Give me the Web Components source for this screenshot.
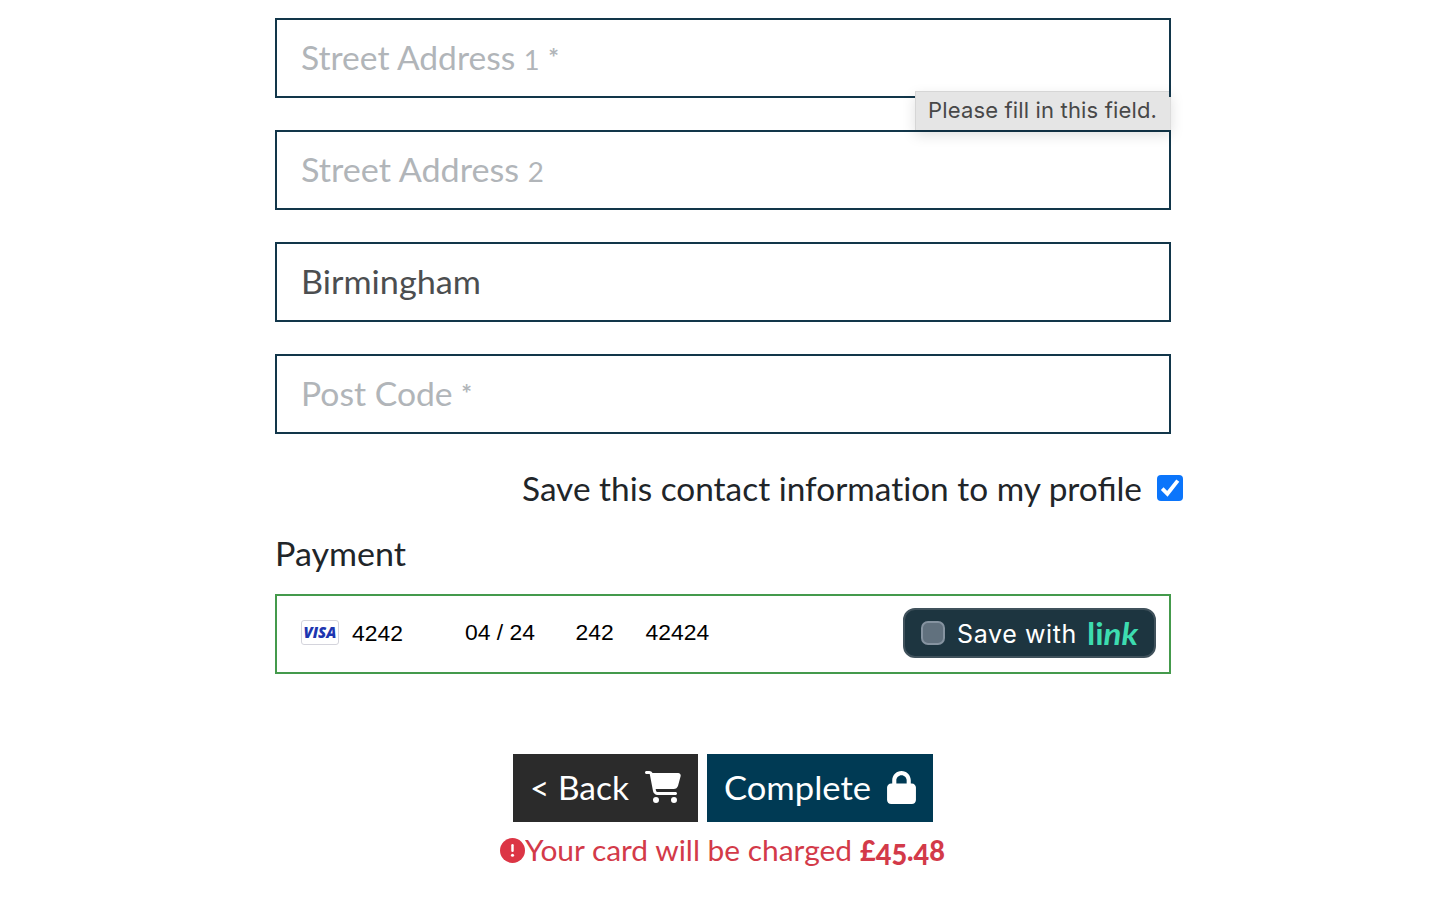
<!DOCTYPE html>
<html lang="en">
<head>
<meta charset="utf-8">
<title>Checkout</title>
<style>
  body { margin: 0; background: #fff; font-family: Lato, sans-serif; color: #212529; }
</style>
</head>
<body>
<checkout-page></checkout-page>
<script>
  const shadow = (el, html) => { el.attachShadow({ mode: 'open' }).innerHTML = html; };

  // Single line of text that fills a given measure: widened glyphs by default, tracked with [track].
  customElements.define('fit-text', class extends HTMLElement {
    connectedCallback() {
      shadow(this, `<style>
        :host { display: block; white-space: nowrap; }
        span { display: inline-block; white-space: pre; transform-origin: 0 50%; }
      </style><span><slot></slot></span>`);
      const w = +this.getAttribute('w');
      const span = this.shadowRoot.querySelector('span');
      const natural = span.getBoundingClientRect().width;
      if (this.hasAttribute('track')) span.style.letterSpacing = ((w - natural) / this.textContent.length) + 'px';
      else span.style.transform = `scaleX(${w / natural})`;
      this.style.width = w + 'px';
    }
  });

  customElements.define('form-field', class extends HTMLElement {
    connectedCallback() {
      shadow(this, `<style>
        :host { display: flex; align-items: center; position: relative; box-sizing: border-box; height: 80px;
          border: 2px solid #12364a; padding: 0 24px 1px; font-size: 32px; line-height: 40px; color: #4c4e50; }
        :host([empty]) { color: #b1b5b9; }
      </style><slot></slot><slot name="tip"></slot>`);
    }
  });

  customElements.define('tool-tip', class extends HTMLElement {
    connectedCallback() {
      shadow(this, `<style>
        :host { position: absolute; top: 71px; right: -2px; width: 256px; height: 39px; box-sizing: border-box;
          padding-left: 12px; background: #e5e5e5; border: 1px solid #d6d6d6; border-bottom: 0; border-right-color: #dcdcdc;
          box-shadow: 0 5px 14px rgba(0,0,0,.13); font: 22px/37px Inter, sans-serif; color: #484848; }
        :host::after { content: ""; position: absolute; right: -1px; top: -1px; width: 2px; height: 6px; background: #12364a; }
      </style><slot></slot>`);
    }
  });

  customElements.define('check-box', class extends HTMLElement {
    connectedCallback() {
      shadow(this, `<style>:host { display: block; width: 26px; height: 26px; } svg { display: block; }</style>
      <svg width="26" height="26" viewBox="0 0 26 26"><rect width="26" height="26" rx="4" fill="#0b75fb"/>
      <path d="M5.200 13.600 10.400 18.800 20.800 5.600" fill="none" stroke="#fff" stroke-width="3.800"/></svg>`);
    }
  });

  customElements.define('visa-badge', class extends HTMLElement {
    connectedCallback() {
      shadow(this, `<style>
        :host { display: block; width: 38px; height: 25px; margin-bottom: 2px; } svg { display: block; }
        text { font: italic 800 15px "Open Sans", sans-serif; fill: #1d36b0; }
      </style>
      <svg width="38" height="25" viewBox="0 0 38 25"><rect x=".5" y=".5" width="37" height="24" rx="2.500" fill="#fff" stroke="#d4d4dc"/>
      <text x="2.500" y="18" textLength="33" lengthAdjust="spacingAndGlyphs">VISA</text></svg>`);
    }
  });

  customElements.define('link-button', class extends HTMLElement {
    connectedCallback() {
      shadow(this, `<style>
        :host { display: flex; align-items: center; box-sizing: border-box; width: 253px; height: 50px; padding-left: 16px;
          border: 2px solid #40525c; border-radius: 12px; background: #1d3540; color: #fff; font: 25px/40px Inter, sans-serif; }
        i { box-sizing: border-box; width: 24px; height: 24px; border: 2px solid #8593a0; border-radius: 7px; background: #61717e; }
        .save { margin: 2px 0 0 12px; }
        .logo { margin: 0 0 0 10px; font: 700 30px/40px Lato, sans-serif; color: #3ddcb0; }
      </style><i></i><fit-text class="save" track w="120">Save with</fit-text>
      <fit-text class="logo" w="51">li<em>nk</em></fit-text>`);
    }
  });

  customElements.define('card-field', class extends HTMLElement {
    connectedCallback() {
      shadow(this, `<style>
        :host { display: flex; align-items: center; box-sizing: border-box; height: 80px; border: 2px solid #449a4c;
          padding: 0 13px 2px 24px; font: 22.9px/28px "Liberation Sans", Arial, sans-serif; color: #000; }
        div { margin-bottom: 2px; }
        .num { margin: 0 0 0 13px; width: 113px; }
        .exp { width: 110.5px; } .cvc { width: 70px; } link-button { margin-left: auto; }
      </style>
      <visa-badge></visa-badge><div class="num">4242</div><div class="exp">04 / 24</div><div class="cvc">242</div><div>42424</div>
      <link-button></link-button>`);
    }
  });

  customElements.define('action-button', class extends HTMLElement {
    connectedCallback() {
      shadow(this, `<style>
        :host { display: flex; align-items: center; justify-content: space-between; box-sizing: border-box; height: 68px;
          padding: 0 17px 2px; background: #2b2b2b; color: #fff; font-size: 32px; line-height: 40px; }
        :host([primary]) { background: #003a54; }
        ::slotted(fit-text) { margin-top: 1px; }
      </style><slot></slot><slot name="icon"></slot>`);
    }
  });

  customElements.define('charge-note', class extends HTMLElement {
    connectedCallback() {
      shadow(this, `<style>
        :host { display: flex; align-items: center; height: 34px; color: #d33a49; font-size: 28px; line-height: 34px; }
        svg { display: block; margin-top: 1px; }
        b { font-weight: 900; margin-left: 8px; white-space: nowrap; }
        .low { position: relative; top: 4px; }
      </style>
      <svg width="25" height="25" viewBox="0 0 512 512"><circle cx="256" cy="256" r="256" fill="#dc3545"/><path d="M256 150v110" stroke="#fff" stroke-width="50" stroke-linecap="round"/><circle cx="256" cy="352" r="32" fill="#fff"/></svg>
      <fit-text w="327">Your card will be charged</fit-text><b><fit-text w="85">£<span class="low">45</span>.<span class="low">4</span>8</fit-text></b>`);
    }
  });

  customElements.define('checkout-page', class extends HTMLElement {
    connectedCallback() {
      shadow(this, `<style>
        :host { display: block; box-sizing: border-box; width: 1434px; height: 898px; padding: 18px 0 0 275px; overflow: hidden; }
        main { width: 896px; }
        .fields { display: grid; gap: 32px; }
        .fields form-field:first-child { z-index: 1; }
        .old { font-size: 26px; line-height: 0; }
        .star { font-size: 24px; line-height: 0; font-weight: 700; vertical-align: 3px; }
        .plain { letter-spacing: .01px; }
        .save { display: flex; justify-content: flex-end; align-items: center; margin: 35px -12px 0 0; gap: 15px; height: 40px; font-size: 32px; line-height: 40px; }
        check-box { margin-bottom: 2px; }
        h2 { margin: 24px 0 20px; font-weight: 400; font-size: 32px; line-height: 41px; height: 41px; }
        .actions { display: flex; gap: 9px; margin: 80px 0 0 238px; }
        .back { width: 185px; } .done { width: 226px; }
        charge-note { margin: 11px 0 0 225px; }
        svg { display: block; }
      </style>
      <main>
        <div class="fields">
          <form-field empty><fit-text w="258">Street Address <span class="old">1</span> <span class="star">*</span></fit-text><tool-tip slot="tip"><fit-text track w="229">Please fill in this field.</fit-text></tool-tip></form-field>
          <form-field empty><fit-text w="243">Street Address <span class="old">2</span></fit-text></form-field>
          <form-field><fit-text w="180">Birmingham</fit-text></form-field>
          <form-field empty><fit-text w="171">Post Code <span class="star">*</span></fit-text></form-field>
        </div>
        <div class="save"><fit-text w="620">Save this contact <span class="plain">information</span> to my profile</fit-text><check-box></check-box></div>
        <h2><fit-text w="131">Payment</fit-text></h2>
        <card-field></card-field>
        <div class="actions">
          <action-button class="back"><fit-text w="99">&lt; Back</fit-text>
            <svg slot="icon" width="36" height="32" viewBox="0 0 576 512"><path fill="#fff" d="M0 24C0 10.700 10.700 0 24 0h45.500c22 0 41.500 12.800 50.600 32h411c26.300 0 45.500 25 38.600 50.400l-41 152.300c-8.500 31.400-37 53.300-69.500 53.300H170.700l5.400 28.500c2.200 11.300 12.100 19.500 23.600 19.500H488c13.300 0 24 10.700 24 24s-10.700 24-24 24H199.700c-34.600 0-64.300-24.600-70.700-58.500L77.400 54.500c-.7-3.800-4-6.500-7.900-6.500H24C10.700 48 0 37.300 0 24zm128 440a48 48 0 1 1 96 0 48 48 0 1 1-96 0zm336-48a48 48 0 1 1 0 96 48 48 0 1 1 0-96z"/></svg></action-button>
          <action-button class="done" primary><fit-text w="147">Complete</fit-text>
            <svg slot="icon" width="29" height="33" viewBox="0 0 448 512"><path fill="#fff" d="M144 144v48h160v-48c0-44.200-35.800-80-80-80s-80 35.800-80 80zM80 192v-48C80 64.500 144.500 0 224 0s144 64.500 144 144v48h16c35.300 0 64 28.700 64 64v192c0 35.300-28.700 64-64 64H64c-35.300 0-64-28.700-64-64V256c0-35.300 28.700-64 64-64h16z"/></svg></action-button>
        </div>
        <charge-note></charge-note>
      </main>`);
    }
  });
</script>
</body>
</html>
